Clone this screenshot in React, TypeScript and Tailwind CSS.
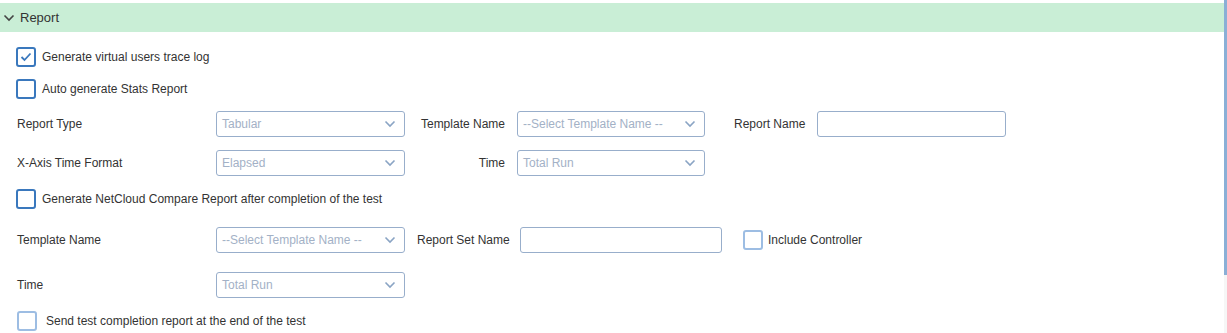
import React from 'react';

const FONT = { fontFamily: '"Liberation Sans", Arial, sans-serif' };

function Chevron({ className = '' }: { className?: string }) {
  return (
    <svg width="12" height="8" viewBox="0 0 12 8" className={className} fill="none">
      <path d="M1.5 1.5 L6 6 L10.5 1.5" stroke="currentColor" strokeWidth="1.6" />
    </svg>
  );
}

function Check({ checked = false, light = false }: { checked?: boolean; light?: boolean }) {
  return (
    <span
      className={`flex h-[20px] w-[20px] shrink-0 items-center justify-center rounded-[3px] border-2 bg-white ${
        light ? 'border-[#9dbde3]' : 'border-[#3a78bd]'
      }`}
    >
      {checked && (
        <svg width="12" height="10" viewBox="0 0 12 10" fill="none">
          <path d="M1.5 5 L4.5 8 L10.5 1.5" stroke="#3a78bd" strokeWidth="1.8" />
        </svg>
      )}
    </span>
  );
}

function Select({ value, w = 'w-[189px]' }: { value: string; w?: string }) {
  return (
    <div
      className={`flex h-[26px] ${w} shrink-0 items-center justify-between rounded-[3px] border border-[#98aecb] bg-white pl-[5px] pr-[8px] text-[12px] text-[#a3b1c6]`}
    >
      <span>{value}</span>
      <Chevron className="text-[#8aa4c4]" />
    </div>
  );
}

function Input({ w }: { w: string }) {
  return <div className={`h-[26px] ${w} shrink-0 rounded-[3px] border border-[#98aecb] bg-white`} />;
}

function CheckRow({ label, checked, light, mt }: { label: string; checked?: boolean; light?: boolean; mt: string }) {
  return (
    <div className={`flex h-[20px] items-center gap-[6px] ${mt}`}>
      <Check checked={checked} light={light} />
      <span>{label}</span>
    </div>
  );
}

export default function App() {
  return (
    <div className="flex h-[333px] w-[1227px] overflow-hidden bg-white text-[12px] text-[#333]" style={FONT}>
      <div className="flex flex-1 flex-col pt-[3px]">
        <div className="flex h-[29px] items-center gap-[5px] bg-[#c9eed6] pl-[3px] text-[13px] text-[#333]">
          <Chevron className="text-[#444]" />
          <span>Report</span>
        </div>

        <div className="flex flex-col pl-[16px]">
          <CheckRow label="Generate virtual users trace log" checked mt="mt-[15px]" />
          <CheckRow label="Auto generate Stats Report" mt="mt-[12px]" />

          <div className="mt-[12px] flex h-[26px] items-center">
            <span className="w-[200px] shrink-0 pl-px">Report Type</span>
            <Select value="Tabular" />
            <span className="w-[112px] shrink-0 pr-[12px] text-right">Template Name</span>
            <Select value="--Select Template Name --" w="w-[188px]" />
            <span className="w-[112px] shrink-0 pl-[29px]">Report Name</span>
            <Input w="w-[189px]" />
          </div>

          <div className="mt-[13px] flex h-[26px] items-center">
            <span className="w-[200px] shrink-0 pl-px">X-Axis Time Format</span>
            <Select value="Elapsed" />
            <span className="w-[112px] shrink-0 pr-[12px] text-right">Time</span>
            <Select value="Total Run" w="w-[188px]" />
          </div>

          <CheckRow label="Generate NetCloud Compare Report after completion of the test" mt="mt-[13px]" />

          <div className="mt-[18px] flex h-[26px] items-center">
            <span className="w-[200px] shrink-0 pl-px">Template Name</span>
            <Select value="--Select Template Name --" />
            <span className="w-[115px] shrink-0 pl-[12px]">Report Set Name</span>
            <Input w="w-[202px]" />
            <div className="ml-[21px] flex items-center gap-[5px]">
              <Check light />
              <span>Include Controller</span>
            </div>
          </div>

          <div className="mt-[19px] flex h-[26px] items-center">
            <span className="w-[200px] shrink-0 pl-px">Time</span>
            <Select value="Total Run" />
          </div>

          <div className="mt-[13px] flex h-[20px] items-center gap-[9px] pl-px">
            <Check light />
            <span>Send test completion report at the end of the test</span>
          </div>
        </div>
      </div>
      <div className="flex w-[3px] flex-col bg-[#f6f6f6]">
        <div className="h-[275px] bg-[#8aafd6]" />
      </div>
    </div>
  );
}
